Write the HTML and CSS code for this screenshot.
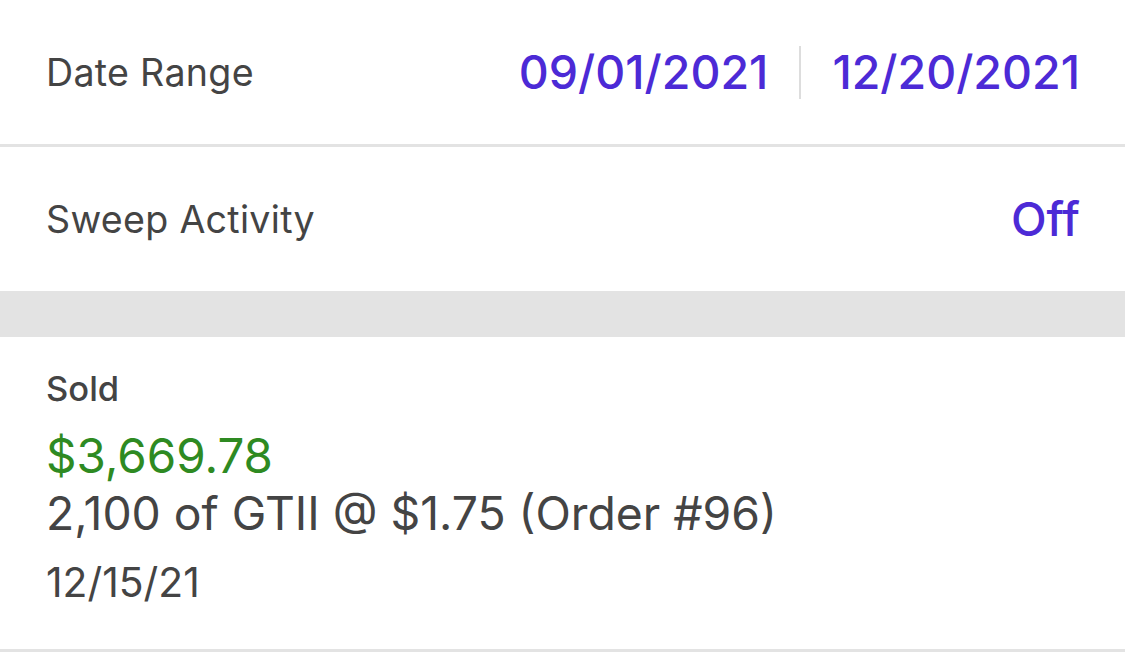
FILE: index.html
```html
<!DOCTYPE html>
<html>

<head>
    <title>Activity</title>
    <meta charset="utf-8">
    <link rel="stylesheet" href="styles.css">
</head>

<body>
    <section class="filters">
        <div class="row">
            <span class="label">Date Range</span>
            <span class="range">
                <span class="value">09/01/2021</span>
                <span class="sep"></span>
                <span class="value">12/20/2021</span>
            </span>
        </div>
        <div class="row">
            <span class="label">Sweep Activity</span>
            <span class="value">Off</span>
        </div>
    </section>

    <div class="band"></div>

    <section class="activity">
        <div class="item">
            <div class="kind">Sold</div>
            <div class="amount">$3,669.78</div>
            <div class="detail">2,100 of GTII @ $1.75 (Order #96)</div>
            <div class="date">12/15/21</div>
        </div>
    </section>
</body>

</html>
```
FILE: styles.css
```css
body {
    margin: 0;
    background-color: #fff;
    color: #444;
    font-family: Inter, "Noto Sans", sans-serif;
}

.row {
    display: flex;
    align-items: center;
    justify-content: space-between;
    height: 144px;
    padding: 0 45px 0 46px;
}

.row + .row {
    border-top: 3px solid #e3e3e3;
}

.label {
    font-size: 37.6px;
    letter-spacing: 0.3px;
}

.value {
    color: #4c2ad6;
    font-size: 46.5px;
    font-weight: 500;
}

.range {
    display: flex;
    align-items: center;
    gap: 31px;
}

.sep {
    width: 2px;
    height: 53px;
    background-color: #ddd;
}

.band {
    height: 46px;
    background-color: #e3e3e3;
}

.item {
    padding: 26px 46px 0;
    height: 286px;
    border-bottom: 4px solid #e3e3e3;
}

.kind {
    font-size: 34.5px;
    font-weight: 500;
    line-height: 52px;
}

.amount {
    color: #2e8a22;
    font-size: 47.5px;
    line-height: 60px;
    margin-top: 11px;
}

.detail {
    font-size: 46.3px;
    line-height: 54px;
}

.date {
    font-size: 40.8px;
    line-height: 84px;
}
```
